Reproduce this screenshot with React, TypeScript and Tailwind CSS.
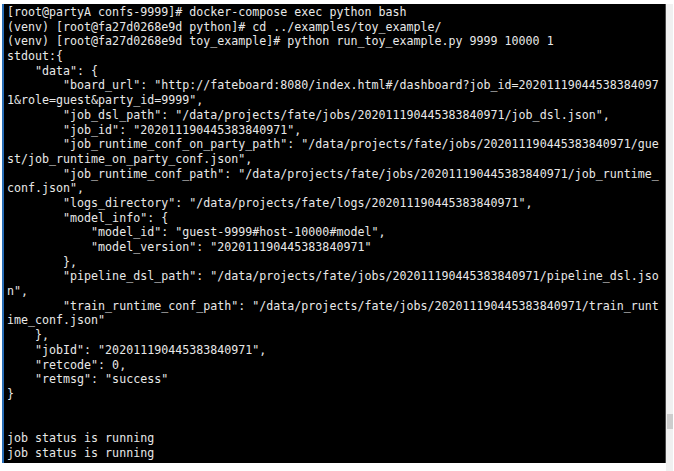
const lines: string[] = [
  '[root@partyA confs-9999]# docker-compose exec python bash',
  '(venv) [root@fa27d0268e9d python]# cd ../examples/toy_example/',
  '(venv) [root@fa27d0268e9d toy_example]# python run_toy_example.py 9999 10000 1',
  'stdout:{',
  '    "data": {',
  '        "board_url": "http://fateboard:8080/index.html#/dashboard?job_id=20201119044538384097',
  '1&role=guest&party_id=9999",',
  '        "job_dsl_path": "/data/projects/fate/jobs/202011190445383840971/job_dsl.json",',
  '        "job_id": "202011190445383840971",',
  '        "job_runtime_conf_on_party_path": "/data/projects/fate/jobs/202011190445383840971/gue',
  'st/job_runtime_on_party_conf.json",',
  '        "job_runtime_conf_path": "/data/projects/fate/jobs/202011190445383840971/job_runtime_',
  'conf.json",',
  '        "logs_directory": "/data/projects/fate/logs/202011190445383840971",',
  '        "model_info": {',
  '            "model_id": "guest-9999#host-10000#model",',
  '            "model_version": "202011190445383840971"',
  '        },',
  '        "pipeline_dsl_path": "/data/projects/fate/jobs/202011190445383840971/pipeline_dsl.jso',
  'n",',
  '        "train_runtime_conf_path": "/data/projects/fate/jobs/202011190445383840971/train_runt',
  'ime_conf.json"',
  '    },',
  '    "jobId": "202011190445383840971",',
  '    "retcode": 0,',
  '    "retmsg": "success"',
  '}',
  '',
  '',
  'job status is running',
  'job status is running',
];

export default function App() {
  return (
    <div className="flex h-[471px] w-[674px] overflow-hidden bg-white pl-[2px]">
      {/* terminal window */}
      <div className="mt-[4px] h-[459px] w-[664px] border-l-2 border-r border-l-[#2a6fb8] border-r-[#4a4a4a] bg-black pl-[3px] pt-[1px]">
        <div className="font-['DejaVu_Sans_Mono',monospace] text-[11.65px] leading-[14.7px] text-[#e8e8e8]">
          {lines.map((line, i) => (
            <div key={i} className="h-[14.7px] whitespace-pre">
              {line}
            </div>
          ))}
        </div>
      </div>

      {/* scrollbar */}
      <div className="mt-[4px] flex w-[7px] flex-col bg-[#f0f0f0] pl-px">
        <div className="mt-[410px] h-[15px] w-full bg-[#cdcdcd]" />
      </div>
    </div>
  );
}
